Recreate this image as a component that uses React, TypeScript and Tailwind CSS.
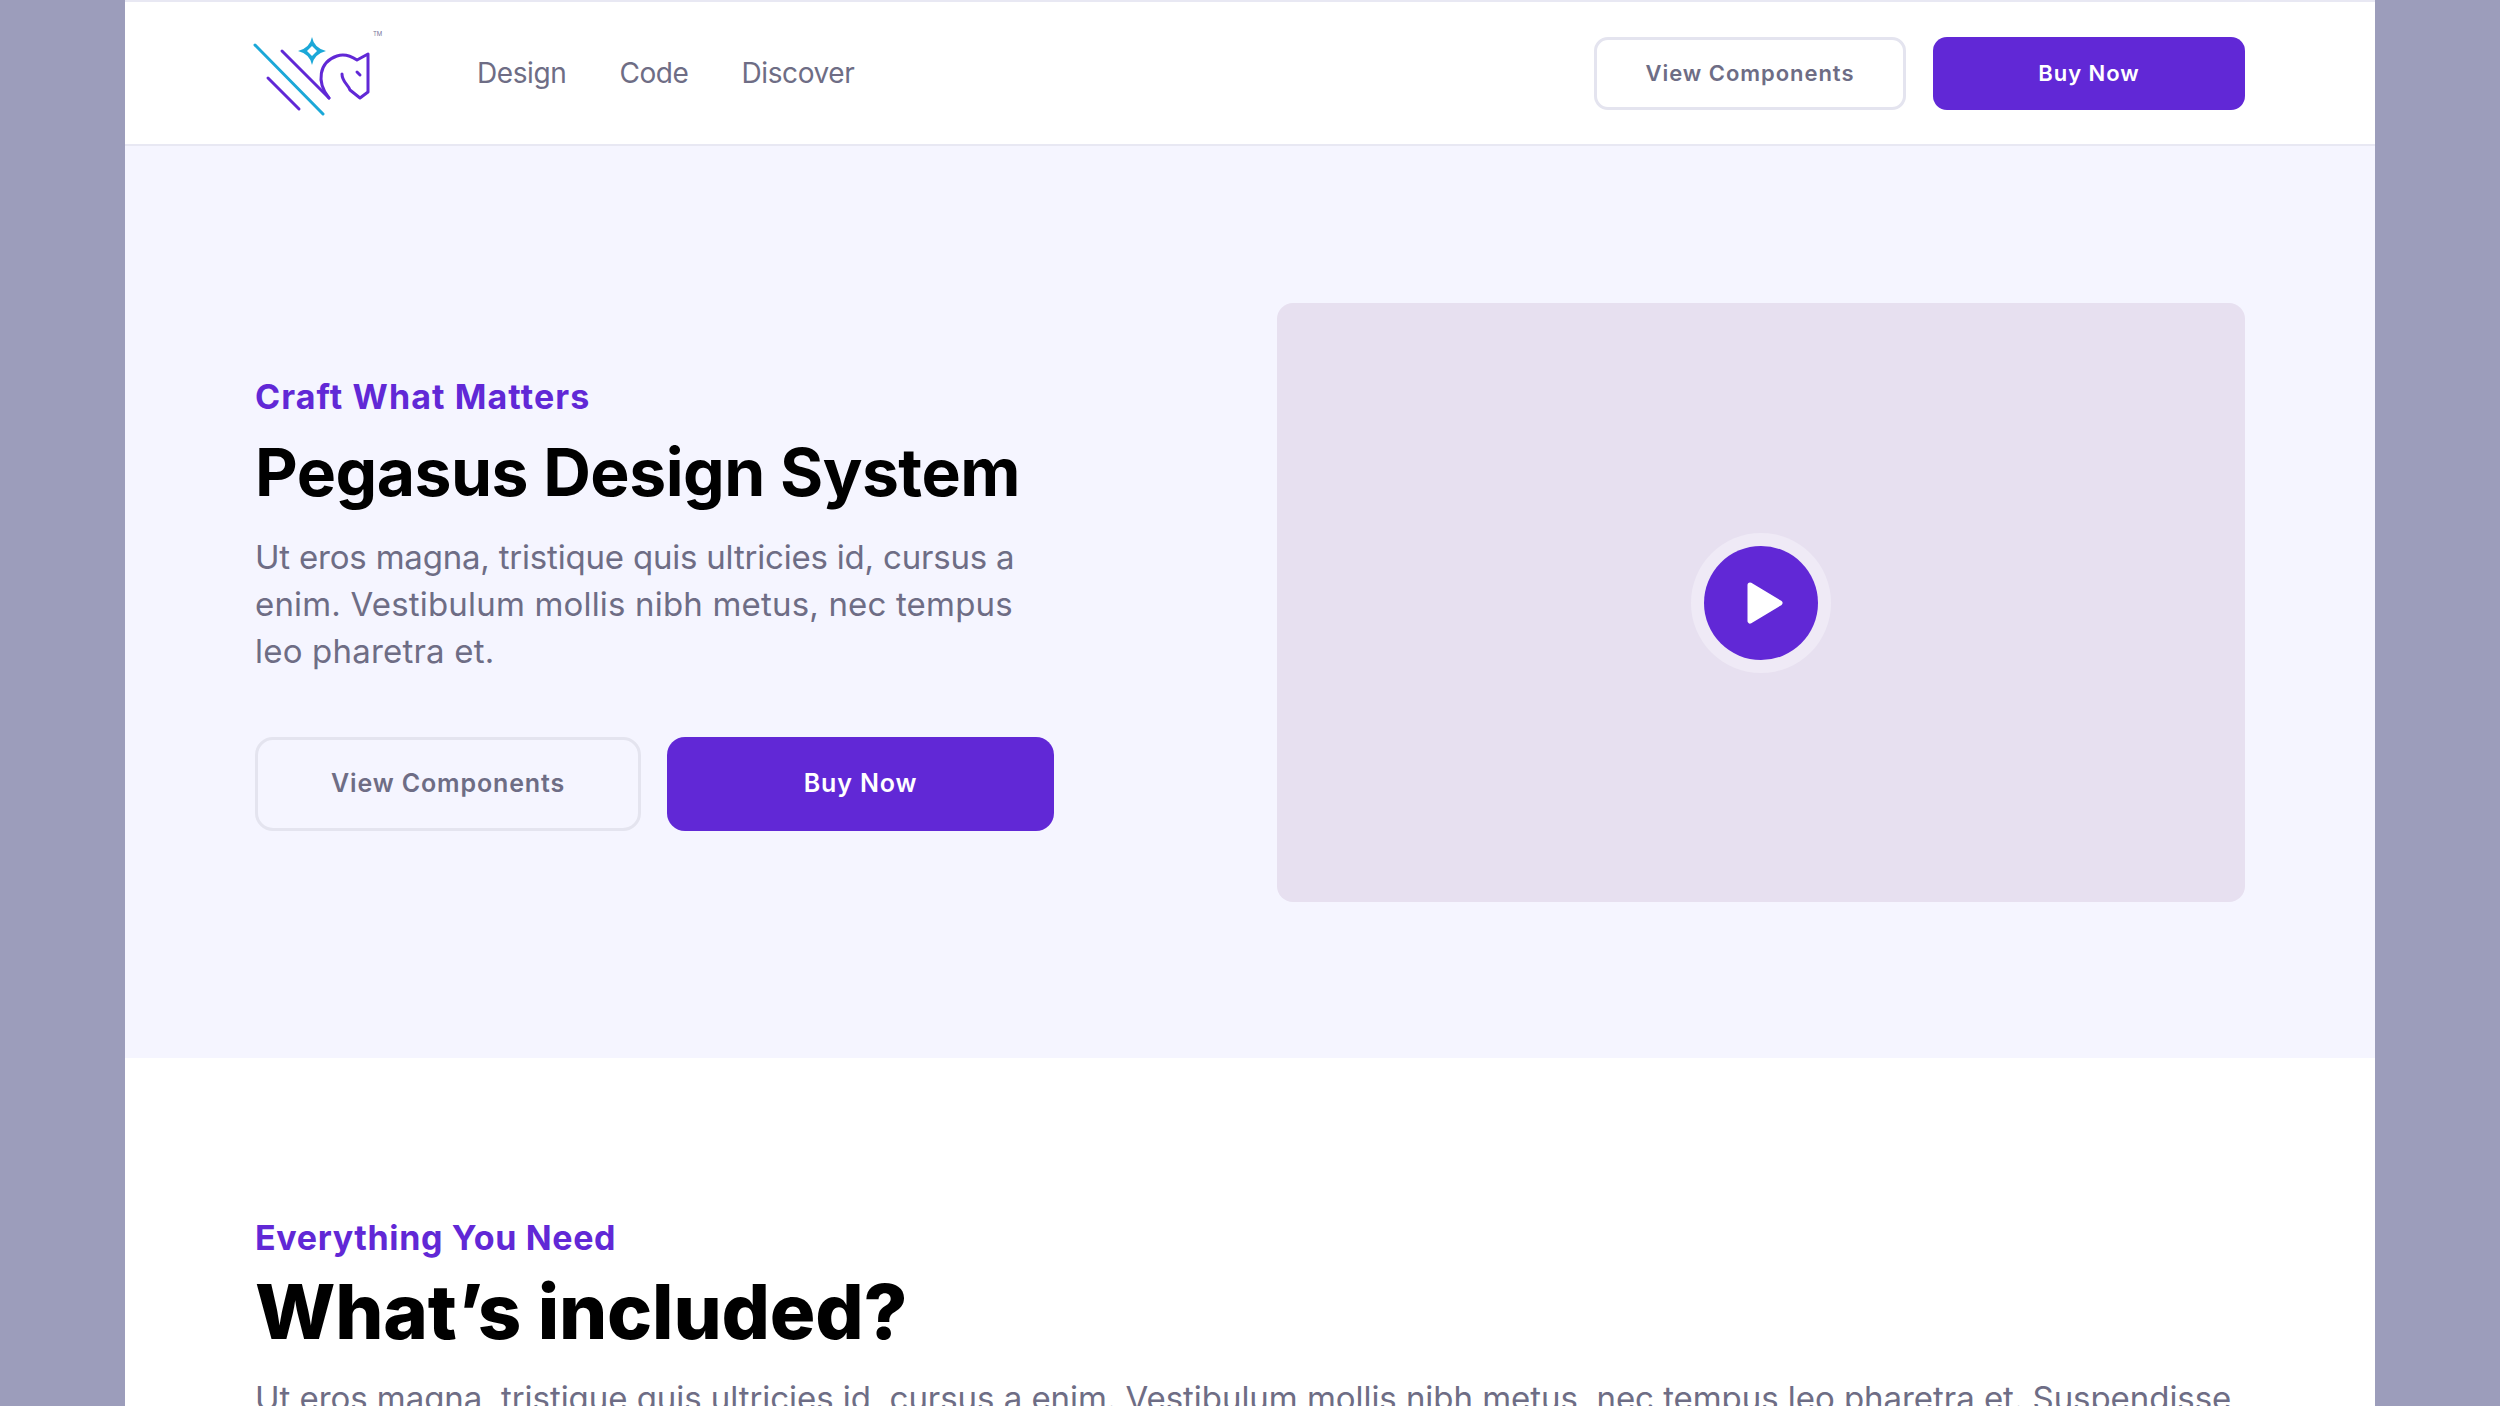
import React from "react";

function Logo() {
  return (
    <svg width="135" height="90" viewBox="0 0 135 90" fill="none" className="shrink-0">
      <g strokeWidth="3" strokeLinecap="round" strokeLinejoin="round">
        <path d="M5 17 L73 86" stroke="#1ba8d8" />
        <path d="M32 23 L79 70 M18 50 L49 81" stroke="#6128d6" />
        <path d="M79 70 C66 54 69 34 87 28 C96 25 104 30 107 32 L118 26 L118 64 L110 70 L100 62 C98 56 92 54 92 46" stroke="#6128d6" />
        <path d="M107 44 L110 47" stroke="#6128d6" />
      </g>
      <path d="M62 9 Q64 20 76 23 Q64 26 62 37 Q60 26 48 23 Q60 20 62 9 Z" fill="#1ba8d8" />
      <path d="M62 18 L67 23 L62 28 L57 23 Z" fill="#fff" />
      <text x="123" y="8" fontSize="6" fill="#77769a" fontFamily="Inter, sans-serif">TM</text>
    </svg>
  );
}

function Play() {
  return (
    <div className="w-[140px] h-[140px] rounded-full bg-[#efeaf6] flex items-center justify-center">
      <div className="w-[114px] h-[114px] rounded-full bg-[#6128d6] flex items-center justify-center">
        <svg width="40" height="44" viewBox="0 0 40 44" className="ml-[8px]">
          <path d="M5 4 L35 22 L5 40 Z" fill="#fff" stroke="#fff" strokeWidth="5" strokeLinejoin="round" />
        </svg>
      </div>
    </div>
  );
}

export default function App() {
  return (
    <div className="h-[1406px] overflow-hidden bg-[#9c9dbb] px-[125px] font-['Inter',sans-serif]">
      <div className="w-[2250px] bg-white">
        <header className="h-[146px] border-t-2 border-b-2 border-[#e8e8f3] flex items-center pl-[125px] pr-[130px]">
          <Logo />
          <nav className="flex gap-[53px] ml-[92px] text-[28px] text-[#6e6d85] tracking-[-0.4px]">
            <span>Design</span>
            <span>Code</span>
            <span>Discover</span>
          </nav>
          <div className="ml-auto flex gap-[27px] text-[22px] font-semibold tracking-[0.95px]">
            <button className="w-[312px] h-[73px] rounded-[14px] border-[3px] border-[#e4e4ef] bg-white text-[#6e6d85]">View Components</button>
            <button className="w-[312px] h-[73px] rounded-[14px] bg-[#6128d6] text-white">Buy Now</button>
          </div>
        </header>

        <section className="bg-[#f5f5ff] pl-[130px] pr-[130px] pt-[157px] pb-[156px] flex items-center justify-between">
          <div className="w-[800px]">
            <p className="text-[34px] leading-[46px] font-bold tracking-[1.1px] text-[#6128d6]">Craft What Matters</p>
            <h1 className="mt-[10px] text-[66px] leading-[84px] font-bold tracking-[-0.5px] text-black">Pegasus Design System</h1>
            <div className="mt-[20px] w-[800px] text-[33px] leading-[47px] text-[#6e6d85]">
              <p className="tracking-[-0.2px]">Ut eros magna, tristique quis ultricies id, cursus a</p>
              <p className="tracking-[0.18px]">enim. Vestibulum mollis nibh metus, nec tempus</p>
              <p className="tracking-[0.2px]">leo pharetra et.</p>
            </div>
            <div className="mt-[62px] flex gap-[26px] text-[25px] font-semibold tracking-[0.87px]">
              <button className="w-[386px] h-[94px] rounded-[18px] border-[3px] border-[#e4e4ef] text-[#6e6d85]">View Components</button>
              <button className="w-[387px] h-[94px] rounded-[18px] bg-[#6128d6] text-white">Buy Now</button>
            </div>
          </div>
          <div className="w-[968px] h-[599px] rounded-[16px] bg-[#e7e0f0] flex items-center justify-center">
            <Play />
          </div>
        </section>

        <section className="pl-[130px] pr-[130px] pt-[157px]">
          <p className="text-[34px] leading-[46px] font-bold tracking-[0.65px] text-[#6128d6]">Everything You Need</p>
          <h2 className="text-[76px] leading-[100px] font-extrabold tracking-[-0.2px] text-black">What’s included?</h2>
          <p className="mt-[14px] text-[33px] leading-[47px] tracking-[-0.05px] text-[#6e6d85] whitespace-nowrap">
            Ut eros magna, tristique quis ultricies id, cursus a enim. Vestibulum mollis nibh metus, nec tempus leo pharetra et. Suspendisse
          </p>
        </section>
      </div>
    </div>
  );
}
